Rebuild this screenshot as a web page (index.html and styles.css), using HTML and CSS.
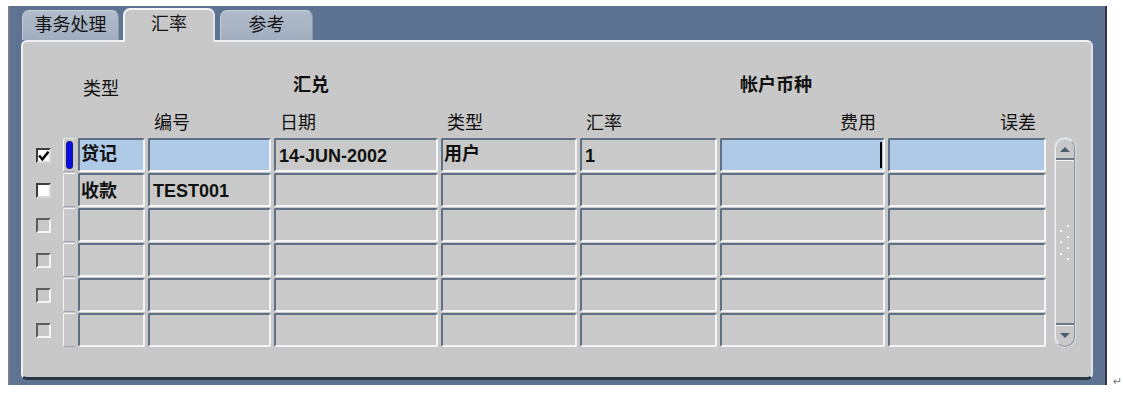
FILE: index.html
```html
<!DOCTYPE html>
<html lang="zh">
<head>
<meta charset="utf-8">
<title>汇率</title>
<link rel="stylesheet" href="styles.css">
</head>
<body>
<div class="page">
  <div class="frame">
    <div class="tabs">
      <div class="tab t1">事务处理</div>
      <div class="tab t2 active">汇率</div>
      <div class="tab t3">参考</div>
    </div>
    <div class="panel">
      <div class="cols hdr1">
        <div class="g3 ghead">类型</div>
        <div class="g5 ghead bold ex">汇兑</div>
        <div class="g8 ghead bold acct">帐户币种</div>
      </div>
      <div class="cols hdr2">
        <div class="g4 chead">编号</div>
        <div class="g5 chead">日期</div>
        <div class="g6 chead">类型</div>
        <div class="g7 chead">汇率</div>
        <div class="g8 chead right">费用</div>
        <div class="g9 chead right r2">误差</div>
      </div>
      <div class="cols table">
        <div class="scroll">
          <div class="sb-up"><span class="tri-up"></span></div>
          <div class="sb-track">
            <svg class="grip" width="14" height="40" viewBox="0 0 14 40">
              <g fill="#ffffff" stroke="#9aa2ab" stroke-width="0.4">
                <circle cx="10" cy="3" r="1.6"/><circle cx="3" cy="8" r="1.6"/>
                <circle cx="10" cy="14" r="1.6"/><circle cx="3" cy="19" r="1.6"/>
                <circle cx="10" cy="25" r="1.6"/><circle cx="3" cy="31" r="1.6"/>
                <circle cx="10" cy="36" r="1.6"/>
              </g>
            </svg>
          </div>
          <div class="sb-down"><span class="tri-down"></span></div>
        </div>

        <!-- row 1 -->
        <div class="cbcell"><span class="cb on"><svg width="11" height="11" viewBox="0 0 10 10"><polyline points="1,5 4,8.5 9.5,1.5" fill="none" stroke="#000" stroke-width="2.2"/></svg></span></div>
        <div class="ind cur"><span class="mark"></span></div>
        <div class="cell sel cj">贷记</div>
        <div class="cell sel"></div>
        <div class="cell lt">14-JUN-2002</div>
        <div class="cell cj">用户</div>
        <div class="cell lt">1</div>
        <div class="cell sel caret"><span class="cursor"></span></div>
        <div class="cell sel"></div>

        <!-- row 2 -->
        <div class="cbcell"><span class="cb on"></span></div>
        <div class="ind"></div>
        <div class="cell cj lower">收款</div>
        <div class="cell lt">TEST001</div>
        <div class="cell"></div>
        <div class="cell"></div>
        <div class="cell"></div>
        <div class="cell"></div>
        <div class="cell"></div>

        <!-- row 3 -->
        <div class="cbcell"><span class="cb off"></span></div>
        <div class="ind"></div>
        <div class="cell"></div><div class="cell"></div><div class="cell"></div><div class="cell"></div><div class="cell"></div><div class="cell"></div><div class="cell"></div>

        <!-- row 4 -->
        <div class="cbcell"><span class="cb off"></span></div>
        <div class="ind"></div>
        <div class="cell"></div><div class="cell"></div><div class="cell"></div><div class="cell"></div><div class="cell"></div><div class="cell"></div><div class="cell"></div>

        <!-- row 5 -->
        <div class="cbcell"><span class="cb off"></span></div>
        <div class="ind"></div>
        <div class="cell"></div><div class="cell"></div><div class="cell"></div><div class="cell"></div><div class="cell"></div><div class="cell"></div><div class="cell"></div>

        <!-- row 6 -->
        <div class="cbcell"><span class="cb off"></span></div>
        <div class="ind"></div>
        <div class="cell"></div><div class="cell"></div><div class="cell"></div><div class="cell"></div><div class="cell"></div><div class="cell"></div><div class="cell"></div>
      </div>
    </div>
  </div>
  <span class="para">↵</span>
</div>
</body>
</html>
```

FILE: styles.css
```css
* { box-sizing: border-box; }

html, body {
  margin: 0;
  padding: 0;
  background: #ffffff;
}

body {
  width: 1123px;
  height: 401px;
  overflow: hidden;
  font-family: "Noto Sans CJK SC", "Noto Sans", sans-serif;
  color: #111;
}

.page {
  display: flex;
  align-items: flex-start;
  padding: 6px 0 0 8px;
}

.frame {
  width: 1099px;
  height: 379px;
  background: #5e7292;
  border-left: 2px solid #7a7f86;
  border-right: 2px solid #2c3540;
  padding: 2px 12px 5px 11px;
  display: flex;
  flex-direction: column;
}

.para {
  align-self: flex-end;
  font-family: "DejaVu Sans", sans-serif;
  font-size: 11px;
  line-height: 12px;
  color: #7d7d7d;
  margin-left: 6px;
  margin-bottom: -3px;
}

/* ---------- tabs ---------- */
.tabs {
  height: 32px;
  display: flex;
  align-items: flex-end;
}

.tab {
  height: 30px;
  font-size: 18px;
  line-height: 24px;
  text-align: center;
  background: linear-gradient(#b1bccb, #a1adbe);
  border-top: 1px solid #c9d0da;
  border-left: 1px solid #c3cad4;
  border-right: 1px solid #8e9aab;
  border-radius: 7px 7px 0 0;
  color: #141414;
}

.t1 { width: 97px; margin-left: 1px; }
.t2 { width: 92px; margin-left: 4px; }
.t3 { width: 93px; margin-left: 5px; }

.tab.active {
  height: 34px;
  margin-bottom: -2px;
  position: relative;
  z-index: 1;
  background: #c8c8c8;
  border-top: 2px solid #f4f6f8;
  border-left: 2px solid #f0f2f5;
  border-right: 2px solid #e2e6ea;
  line-height: 24px;
}

/* ---------- panel ---------- */
.panel {
  flex: 1;
  background: #c8c8c8;
  border-top: 2px solid #eef1f4;
  border-left: 2px solid #eef1f4;
  border-right: 2px solid #dfe3e7;
  border-bottom: 3px solid #2a3646;
  border-radius: 6px;
  padding: 30px 0 0 7px;
}

.cols {
  display: grid;
  grid-template-columns: 30px 12px 67px 123px 164px 136px 137px 165px 158px 26px;
  column-gap: 3px;
}

.g3 { grid-column: 3; }
.g4 { grid-column: 4; }
.g5 { grid-column: 5; }
.g6 { grid-column: 6; }
.g7 { grid-column: 7; }
.g8 { grid-column: 8; }
.g9 { grid-column: 9; }

.hdr1 {
  height: 26px;
  grid-template-rows: 26px;
}

.ghead {
  grid-row: 1;
  font-size: 18px;
  line-height: 26px;
  padding-left: 5px;
  padding-top: 2px;
  white-space: nowrap;
}

.ghead.bold { font-weight: 700; padding-top: 0; margin-top: -2px; }
.ghead.ex { padding-left: 19px; }
.ghead.acct { padding-left: 20px; }

.hdr2 {
  height: 38px;
  margin-top: 1px;
  grid-template-rows: 38px;
}

.chead {
  grid-row: 1;
  align-self: end;
  font-size: 18px;
  line-height: 20px;
  margin-bottom: 6px;
  padding-left: 6px;
  white-space: nowrap;
}

.chead.right { text-align: right; padding-left: 0; padding-right: 9px; }
.chead.right.r2 { padding-right: 10px; }

/* ---------- table ---------- */
.table {
  margin-top: 1px;
  grid-template-rows: repeat(6, 34px);
  row-gap: 1px;
}

.cell {
  background: #c9c9c9;
  border: 2px solid;
  border-color: #5f6f84 #f3f5f7 #f3f5f7 #5f6f84;
  border-radius: 2px;
  font-weight: 700;
  white-space: nowrap;
  overflow: hidden;
}

.cell.sel { background: #aecae6; }

.cell.cj {
  font-size: 18px;
  line-height: 22px;
  padding: 1px 0 0 1px;
}

.cell.cj.lower { padding-top: 3px; }

.cell.lt {
  font-family: "Liberation Sans", Arial, sans-serif;
  font-size: 18px;
  line-height: 22px;
  padding: 5px 0 0 3px;
}

.cell.caret {
  display: flex;
  justify-content: flex-end;
  align-items: center;
  padding-right: 1px;
}

.cursor {
  width: 2px;
  height: 26px;
  background: #000;
}

.cbcell {
  display: flex;
  align-items: center;
  padding-left: 6px;
}

.cb {
  width: 15px;
  height: 15px;
  border: 2px solid;
  border-color: #3c3c3c #d9d9d9 #d9d9d9 #3c3c3c;
  background: #ffffff;
  display: flex;
  align-items: center;
  justify-content: center;
}

.cb.off {
  background: #c8c8c8;
  border-color: #5c5c5c #f4f4f4 #f4f4f4 #5c5c5c;
}

.ind {
  border-left: 1px solid #f2f4f6;
  border-top: 1px solid #f2f4f6;
  border-bottom: 1px solid #9aa4b0;
  border-radius: 2px 0 0 2px;
}

.ind.cur {
  border-top-color: #e6eaee;
}

.mark {
  display: block;
  width: 7px;
  height: 28px;
  margin: 2px 0 0 2px;
  background: #0b0bea;
  border: 1px solid #1a1a70;
  border-radius: 3px;
}

/* ---------- scrollbar ---------- */
.scroll {
  grid-column: 10;
  grid-row: 1 / span 6;
  width: 20px;
  margin-left: 6px;
  border: 1px solid;
  border-color: #eef1f4 #8a939d #8a939d #eef1f4;
  box-shadow: 0 0 0 1px #d6dbe0;
  border-radius: 10px;
  display: flex;
  flex-direction: column;
  overflow: hidden;
  background: #c8c8c8;
}

.sb-up {
  height: 21px;
  border-bottom: 2px solid #6c7786;
  box-shadow: 0 1px 0 #f2f4f6;
  display: flex;
  align-items: center;
  justify-content: center;
  padding-top: 2px;
}

.sb-track {
  flex: 1;
  display: flex;
  align-items: center;
  justify-content: center;
  padding-top: 2px;
}

.sb-down {
  height: 23px;
  border-top: 2px solid #6c7786;
  box-shadow: inset 0 1px 0 #f2f4f6;
  display: flex;
  align-items: center;
  justify-content: center;
}

.tri-up {
  width: 0;
  height: 0;
  border-left: 5px solid transparent;
  border-right: 5px solid transparent;
  border-bottom: 5px solid #4d5b6e;
}

.tri-down {
  width: 0;
  height: 0;
  border-left: 5px solid transparent;
  border-right: 5px solid transparent;
  border-top: 5px solid #4d5b6e;
}
```
